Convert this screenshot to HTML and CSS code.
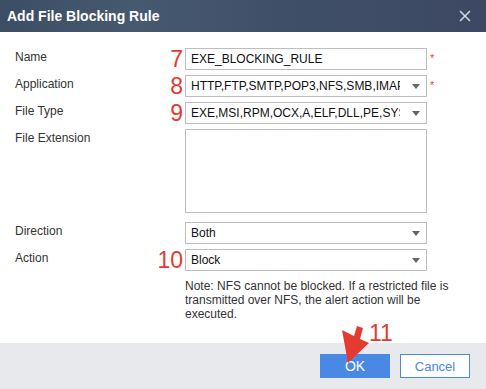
FILE: index.html
```html
<!DOCTYPE html>
<html>
<head>
<meta charset="utf-8">
<link rel="stylesheet" href="styles.css">
</head>
<body>
<div class="dialog">
  <header class="titlebar">
    <h1 class="title">Add File Blocking Rule</h1>
    <span class="close" aria-label="close">
      <svg width="12" height="12" viewBox="0 0 12 12"><path d="M1 1L11 11M11 1L1 11" stroke="#d4d7de" stroke-width="1.5" fill="none"/></svg>
    </span>
  </header>
  <main class="form">
    <div class="row">
      <span class="label">Name</span>
      <span class="mark">7</span>
      <div class="field">EXE_BLOCKING_RULE</div>
      <span class="req">*</span>
    </div>
    <div class="row">
      <span class="label">Application</span>
      <span class="mark">8</span>
      <div class="field select"><span class="val">HTTP,FTP,SMTP,POP3,NFS,SMB,IMAP</span><span class="caret"></span></div>
      <span class="req">*</span>
    </div>
    <div class="row">
      <span class="label">File Type</span>
      <span class="mark">9</span>
      <div class="field select"><span class="val">EXE,MSI,RPM,OCX,A,ELF,DLL,PE,SYS</span><span class="caret"></span></div>
    </div>
    <div class="row">
      <span class="label">File Extension</span>
      <span class="mark"></span>
      <div class="field area"></div>
    </div>
    <div class="row spaced">
      <span class="label">Direction</span>
      <span class="mark"></span>
      <div class="field select"><span class="val">Both</span><span class="caret"></span></div>
    </div>
    <div class="row">
      <span class="label">Action</span>
      <span class="mark">10</span>
      <div class="field select"><span class="val">Block</span><span class="caret"></span></div>
    </div>
    <p class="note">Note: NFS cannot be blocked. If a restricted file is transmitted over NFS, the alert action will be executed.</p>
  </main>
  <footer class="footer">
    <button class="btn primary">OK</button>
    <button class="btn secondary">Cancel</button>
  </footer>
  <span class="mark-11">11</span>
  <svg class="pointer" width="486" height="389" viewBox="0 0 486 389">
    <polygon points="348,363 342,330 354,336 357,326 363,328 360,339 369,343" fill="#e53a30"/>
  </svg>
</div>
</body>
</html>
```
FILE: styles.css
```css
* { box-sizing: border-box; }
html, body { margin: 0; padding: 0; }
body {
  width: 486px;
  height: 389px;
  overflow: hidden;
  background: #fff;
  font-family: "Liberation Sans", Arial, sans-serif;
}
.dialog {
  position: relative;
  width: 486px;
  height: 389px;
  display: flex;
  flex-direction: column;
  background: #fff;
}
.titlebar {
  height: 32px;
  flex: none;
  display: flex;
  align-items: center;
  justify-content: space-between;
  padding: 0 15px 0 7px;
  background: linear-gradient(90deg, #3b4e63 0%, #46596f 28%, #405069 55%, #3d4862 100%);
}
.title {
  margin: 0;
  font-size: 14px;
  font-weight: bold;
  color: #fff;
  line-height: 16px;
}
.close { display: flex; width: 12px; height: 12px; }
.form {
  flex: 1;
  padding: 16px 0 0 15px;
}
.row {
  display: grid;
  grid-template-columns: 140px 30px 242px auto;
  margin-bottom: 5px;
}
.row.spaced { margin-top: 9px; }
.label {
  font-size: 12px;
  line-height: 16px;
  padding-top: 1px;
  color: #333;
}
.mark {
  color: #e53a30;
  font-size: 23px;
  line-height: 22px;
  text-align: right;
  padding-right: 2px;
}
.field {
  height: 22px;
  border: 1px solid #bdbdbd;
  background: #fff;
  font-size: 12px;
  line-height: 20px;
  padding: 0 5px;
  color: #111;
  white-space: nowrap;
  overflow: hidden;
}
.field.select {
  display: flex;
  align-items: center;
  padding-right: 6px;
}
.field.select .val {
  flex: 1;
  overflow: hidden;
  min-width: 0;
  margin-right: 12px;
}
.caret {
  flex: none;
  width: 0;
  height: 0;
  border-left: 4px solid transparent;
  border-right: 4px solid transparent;
  border-top: 5px solid #666;
}
.field.area { height: 84px; }
.req {
  color: #f03c2e;
  font-size: 11px;
  line-height: 16px;
  padding: 2px 0 0 3px;
}
.note {
  margin: 8px 0 0 170px;
  width: 280px;
  font-size: 12px;
  line-height: 14px;
  color: #333;
}
.footer {
  flex: none;
  height: 46px;
  background: #e8e9ed;
  display: flex;
  justify-content: flex-end;
  align-items: flex-start;
  gap: 10px;
  padding: 11px 16px 0 0;
}
.btn {
  width: 70px;
  height: 24px;
  font-family: "Liberation Sans", Arial, sans-serif;
  font-size: 13px;
  padding: 0;
  cursor: pointer;
}
.btn.primary {
  background: #4a88e6;
  border: 1px solid #4a88e6;
  color: #fff;
  font-size: 14px;
}
.btn.secondary {
  background: #fff;
  border: 1px solid #4a88e6;
  color: #4a88e6;
}
.mark-11 {
  position: absolute;
  left: 369px;
  top: 320px;
  font-size: 23px;
  line-height: 26px;
  color: #e53a30;
}
.pointer {
  position: absolute;
  left: 0;
  top: 0;
  pointer-events: none;
}
```
